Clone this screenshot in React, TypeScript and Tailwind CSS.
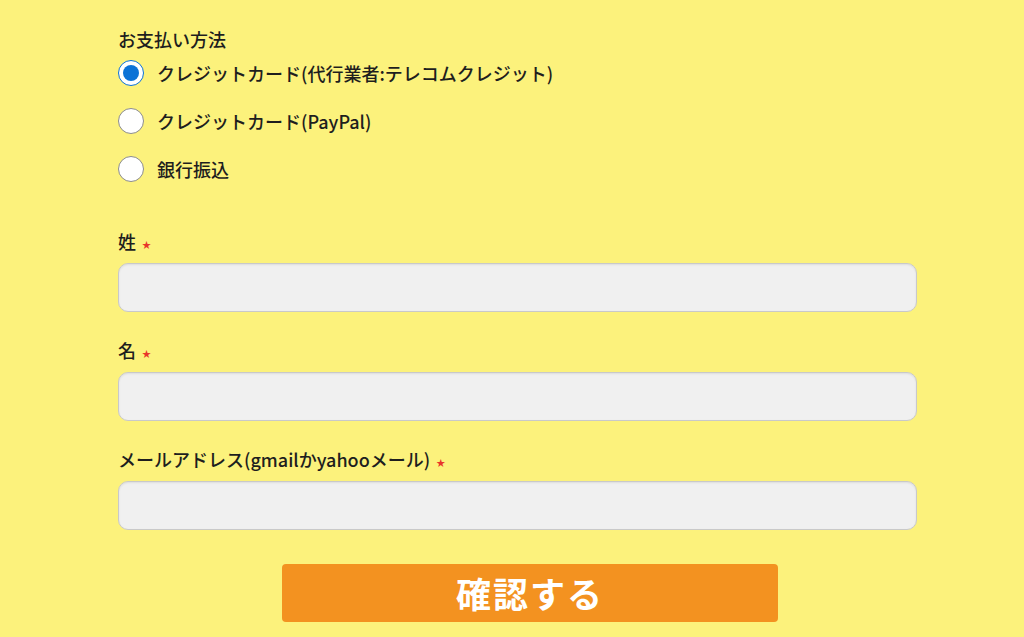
import React from "react";

const font = { fontFamily: '"Noto Sans CJK JP", "Noto Sans", sans-serif' };

function Radio({ checked }: { checked?: boolean }) {
  return checked ? (
    <span className="flex h-[26px] w-[26px] shrink-0 items-center justify-center rounded-full border-[1.5px] border-[#0b72d6] bg-white">
      <span className="h-[16px] w-[16px] rounded-full bg-[#0b72d6]" />
    </span>
  ) : (
    <span className="h-[26px] w-[26px] shrink-0 rounded-full border-[1.5px] border-[#8c8c8c] bg-white" />
  );
}

function Star() {
  return <span className="ml-[6px] text-[9px] leading-none text-[#e8362b] relative top-[3px]">★</span>;
}

function Field({ label, first }: { label: string; first?: boolean }) {
  return (
    <div className={first ? "mt-[40px]" : "mt-[25px]"}>
      <div className="flex items-center h-[27px] text-[18px] font-medium text-[#1e1e1e]">
        <span>{label}</span>
        <Star />
      </div>
      <input
        className="mt-[8px] block h-[49px] w-[799px] rounded-[10px] border border-[#c9c9c9] bg-[#f0f0f0] shadow-[inset_0_1px_2px_rgba(0,0,0,0.08)] outline-none"
        type="text"
      />
    </div>
  );
}

export default function App() {
  const options = [
    { label: "クレジットカード(代行業者:テレコムクレジット)", checked: true },
    { label: "クレジットカード(PayPal)" },
    { label: "銀行振込" },
  ];
  return (
    <div className="min-h-[637px] w-[1024px] bg-[#fcf27c] pt-[26px] pl-[118px]" style={font}>
      <div className="h-[27px] text-[18px] font-medium leading-[27px] text-[#1e1e1e]">お支払い方法</div>
      <div className="mt-[1px] flex flex-col gap-[10px]">
        {options.map((o) => (
          <div key={o.label} className="flex h-[38px] items-center gap-[13px]">
            <Radio checked={o.checked} />
            <span className="text-[18px] font-medium leading-[27px] text-[#1e1e1e]">{o.label}</span>
          </div>
        ))}
      </div>
      <Field label="姓" first />
      <Field label="名" />
      <Field label="メールアドレス(gmailかyahooメール)" />
      <button className="ml-[164px] mt-[34px] flex h-[58px] w-[496px] items-center justify-center rounded-[4px] bg-[#f39220] text-[35px] font-bold tracking-[2px] text-white">
        確認する
      </button>
    </div>
  );
}
